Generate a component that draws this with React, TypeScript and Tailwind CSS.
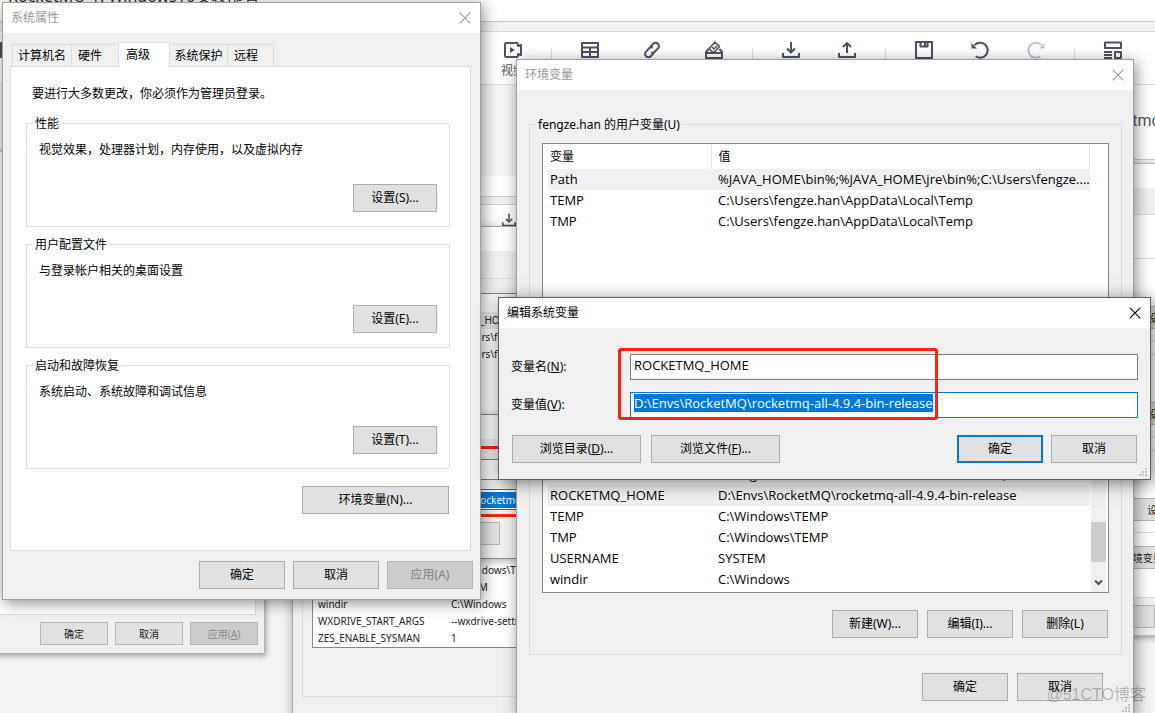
import React, { useEffect, useRef } from 'react'
import clsx from 'clsx'

type Row = [string, string]

const userVars: Row[] = [
  ['Path', '%JAVA_HOME\\bin%;%JAVA_HOME\\jre\\bin%;C:\\Users\\fengze....'],
  ['TEMP', 'C:\\Users\\fengze.han\\AppData\\Local\\Temp'],
  ['TMP', 'C:\\Users\\fengze.han\\AppData\\Local\\Temp'],
]

const systemVars: Row[] = [
  ['Path', 'C:\\Windows\\system32;C:\\Windows'],
  ['PSModulePath', '%ProgramFiles%\\WindowsPowerShell\\Modules;C:\\Wi...'],
  ['ROCKETMQ_HOME', 'D:\\Envs\\RocketMQ\\rocketmq-all-4.9.4-bin-release'],
  ['TEMP', 'C:\\Windows\\TEMP'],
  ['TMP', 'C:\\Windows\\TEMP'],
  ['USERNAME', 'SYSTEM'],
  ['windir', 'C:\\Windows'],
]

const oldSystemVars: Row[] = [
  ['TEMP', 'C:\\Windows\\TEMP'],
  ['TMP', 'C:\\Windows\\TEMP'],
  ['USERNAME', 'SYSTEM'],
  ['windir', 'C:\\Windows'],
  ['WXDRIVE_START_ARGS', '--wxdrive-setting=0'],
  ['ZES_ENABLE_SYSMAN', '1'],
]

const Btn = ({ className = 'w-[86px]', ...rest }: React.ComponentProps<'button'>) => (
  <button
    type="button"
    className={clsx('h-7 border border-[#adadad] bg-[#e1e1e1] disabled:border-[#b5b5b5] disabled:bg-[#cccccc] disabled:text-[#838383]', className)}
    {...rest}
  />
)

const SmallBtn = ({ className = 'w-[68px]', ...rest }: React.ComponentProps<'button'>) => (
  <button
    type="button"
    className={clsx('h-[23px] border border-[#b5b5b5] bg-[#e1e1e1] text-[10px] text-[#222] disabled:bg-[#cccccc] disabled:text-[#8a8a8a]', className)}
    {...rest}
  />
)

const TitleBar = ({ title, active = false }: { title: string; active?: boolean }) => (
  <div className={clsx('flex h-[30px] items-center justify-between bg-white pl-2 pr-[9px]', active ? 'text-black' : 'text-[#999]')}>
    <span>{title}</span>
    <button type="button" aria-label="关闭">
      <svg width="12" height="12" viewBox="0 0 12 12" fill="none" stroke="currentColor" strokeWidth="1.1">
        <path d="M.7.7l10.6 10.6M11.3.7L.7 11.3" />
      </svg>
    </button>
  </div>
)

const Grip = () => (
  <svg className="absolute bottom-[2px] right-[2px]" width="9" height="9" fill="#bfbfbf">
    <path d="M6 0h2v2H6zM3 3h2v2H3zM6 3h2v2H6zM0 6h2v2H0zM3 6h2v2H3zM6 6h2v2H6z" />
  </svg>
)

/* System properties */
const SettingGroup = ({ title, text, hotkey }: { title: string; text: string; hotkey: string }) => (
  <fieldset className="border border-[#dcdcdc]">
    <legend className="ml-[6px] px-[2px] pt-[2px] leading-4">{title}</legend>
    <div className="flex flex-col pb-[14px] pl-3 pr-3 pt-[10px]">
      <p className="leading-4">{text}</p>
      <Btn className="mt-[26px] w-[84px] self-end">设置({hotkey})...</Btn>
    </div>
  </fieldset>
)

const SystemProperties = () => (
  <section className="absolute left-[2px] top-[2px] w-[479px] border border-[#a0a0a0] bg-[#f0f0f0] shadow-[2px_3px_14px_rgba(0,0,0,0.45)]">
    <TitleBar title="系统属性" />
    <div className="flex items-end pl-[9px] pt-[9px]">
      <button type="button" className="h-[22px] w-[59px] border-l border-t border-[#dcdcdc] text-center">计算机名</button>
      <button type="button" className="h-[22px] w-[47px] border-l border-t border-[#dcdcdc] pl-[6px] text-left">硬件</button>
      <button type="button" className="relative z-10 -mb-px h-[25px] w-[52px] border-x border-t border-[#dcdcdc] bg-white pl-[7px] text-left">高级</button>
      <button type="button" className="h-[22px] w-[57px] border-t border-[#dcdcdc] text-center">系统保护</button>
      <button type="button" className="h-[22px] w-[47px] border-x border-t border-[#dcdcdc] pl-[6px] text-left">远程</button>
    </div>
    <div className="ml-[7px] mr-[9px] flex flex-col border border-[#dcdcdc] bg-white pb-9 pl-[15px] pr-5 pt-[19px]">
      <p className="mb-3 pl-[6px] leading-4">要进行大多数更改，你必须作为管理员登录。</p>
      <div className="flex flex-col gap-2">
        <SettingGroup title="性能" text="视觉效果，处理器计划，内存使用，以及虚拟内存" hotkey="S" />
        <SettingGroup title="用户配置文件" text="与登录帐户相关的桌面设置" hotkey="E" />
        <SettingGroup title="启动和故障恢复" text="系统启动、系统故障和调试信息" hotkey="T" />
      </div>
      <Btn className="mr-px mt-[17px] w-[147px] self-end">环境变量(N)...</Btn>
    </div>
    <div className="flex justify-end gap-2 py-[10px] pr-[7px]">
      <Btn>确定</Btn>
      <Btn>取消</Btn>
      <Btn disabled>应用(A)</Btn>
    </div>
  </section>
)

/* Environment variables */
const VarTable = ({ rows, selected, scroll }: { rows: Row[]; selected: number; scroll?: boolean }) => (
  <div className="flex h-44 justify-between border border-[#828790] bg-white pl-[5px]">
    <table className="w-[542px] table-fixed self-start text-left">
      <thead>
        <tr className="h-[25px]">
          <th className="w-[163px] border-r border-[#e5e5e5] pl-[2px] font-normal">变量</th>
          <th className="border-r border-[#e5e5e5] pl-[7px] font-normal">值</th>
        </tr>
      </thead>
      <tbody className="text-[13px] [font-family:'Open_Sans','Noto_Sans_CJK_SC',sans-serif]">
        {rows.map(([name, value], i) => (
          <tr key={name} className={clsx('h-[21px] whitespace-nowrap', i === selected && 'bg-[#f0f0f0]')}>
            <td className="pb-[2px] pl-[2px]">{name}</td>
            <td className="pb-[2px] pl-[7px]">{value}</td>
          </tr>
        ))}
      </tbody>
    </table>
    {scroll && (
      <div className="mr-[2px] flex w-[15px] flex-col items-center justify-end bg-[#f0f0f0] pb-[6px]">
        <div className="mb-[17px] h-10 w-full bg-[#cdcdcd]" />
        <svg width="9" height="7" viewBox="0 0 9 7" fill="none" stroke="#505050" strokeWidth="2">
          <path d="M1 1.5l3.5 3.5L8 1.5" />
        </svg>
      </div>
    )}
  </div>
)

const VarGroup = ({ title, keys, children }: { title: string; keys: string[]; children: React.ReactNode }) => (
  <fieldset className="min-w-0 border border-[#dcdcdc]">
    <legend className="ml-[6px] px-[2px] pt-[2px] leading-4">{title}</legend>
    <div className="px-3 pb-4 pt-[10px]">
      {children}
      <div className="mt-[17px] flex justify-end gap-[9px] pr-px">
        <Btn>新建({keys[0]})...</Btn>
        <Btn>编辑({keys[1]})...</Btn>
        <Btn>删除({keys[2]})</Btn>
      </div>
    </div>
  </fieldset>
)

const EnvironmentVariables = () => (
  <section className="absolute left-[516px] top-[59px] w-[618px] border border-[#a0a0a0] bg-[#f0f0f0] shadow-[2px_3px_14px_rgba(0,0,0,0.45)]">
    <TitleBar title="环境变量" />
    <div className="flex flex-col gap-2 pl-3 pr-[11px] pt-[25px]">
      <VarGroup title="fengze.han 的用户变量(U)" keys={['N', 'E', 'D']}>
        <VarTable rows={userVars} selected={0} />
      </VarGroup>
      <VarGroup title="系统变量(S)" keys={['W', 'I', 'L']}>
        <VarTable rows={systemVars} selected={2} scroll />
      </VarGroup>
    </div>
    <div className="flex justify-end gap-[9px] pb-[14px] pr-[30px] pt-[18px]">
      <Btn>确定</Btn>
      <Btn>取消</Btn>
    </div>
    <Grip />
  </section>
)

/* Edit system variable */
const fieldClass =
  "h-[26px] min-w-0 flex-1 border bg-white pb-[4px] pl-[3px] text-[13px] outline-none [font-family:'Open_Sans','Noto_Sans_CJK_SC',sans-serif]"

const EditVariable = () => {
  const valueRef = useRef<HTMLInputElement>(null)

  useEffect(() => {
    valueRef.current?.focus()
    valueRef.current?.select()
  }, [])

  return (
    <section className="absolute left-[498px] top-[297px] w-[653px] border border-[#5f5f5f] bg-[#f0f0f0] shadow-[2px_3px_16px_rgba(0,0,0,0.5)]">
      <TitleBar title="编辑系统变量" active />
      <div className="px-3 pb-4 pt-[26px]">
        <div className="flex items-center">
          <label htmlFor="var-name" className="w-[119px]">变量名(<u>N</u>):</label>
          <input id="var-name" defaultValue="ROCKETMQ_HOME" className={clsx(fieldClass, 'border-[#7a7a7a]')} />
        </div>
        <div className="mt-3 flex items-center">
          <label htmlFor="var-value" className="w-[119px]">变量值(<u>V</u>):</label>
          <input
            id="var-value"
            ref={valueRef}
            defaultValue="D:\Envs\RocketMQ\rocketmq-all-4.9.4-bin-release"
            className={clsx(fieldClass, 'border-[#0078d7] selection:bg-[#0078d7] selection:text-white')}
          />
        </div>
        <div className="mt-[17px] flex justify-between px-px">
          <div className="flex gap-[10px]">
            <Btn className="w-[129px]">浏览目录(<u>D</u>)...</Btn>
            <Btn className="w-[129px]">浏览文件(<u>F</u>)...</Btn>
          </div>
          <div className="flex gap-2">
            <button type="button" className="h-7 w-[86px] border-2 border-[#0078d7] bg-[#e1e1e1]">确定</button>
            <Btn>取消</Btn>
          </div>
        </div>
      </div>
      {/* red marker round both fields */}
      <div className="absolute left-[119px] top-[50px] h-[72px] w-[320px] rounded-[3px] border-[3px] border-[#fb2312]" />
      <Grip />
    </section>
  )
}

/* Editor page behind the dialogs */
const Icon = ({ children }: { children: React.ReactNode }) => (
  <svg width="18" height="18" viewBox="0 0 18 18" fill="none" stroke="currentColor" strokeWidth="2" strokeLinejoin="round">{children}</svg>
)

const downloadPath = 'M1 12v4h16v-4M9 1v10M5 7.5l4 4 4-4'

const Tool = ({ label, off, children }: { label: string; off?: boolean; children: React.ReactNode }) => (
  <button type="button" aria-label={label} className={clsx('flex w-14 flex-col items-center', off ? 'text-[#c4c4cc]' : 'text-[#4f5063]')}>
    <Icon>{children}</Icon>
  </button>
)

const Divider = () => <div className="mx-[10px] mt-2 h-6 w-px bg-[#dadada]" />

const Toolbar = () => (
  <div className="flex h-[53px] items-start justify-end border-b border-[#dadada] bg-white pr-[14px] pt-[9px]">
    <div className="mr-auto mt-px h-4 w-[2px] bg-[#4f5063]" />
    <button type="button" className="flex w-14 flex-col items-center text-[#4f5063]">
      <Icon>
        <path d="M1 3.2Q1 2 2.2 2h10.6Q14 2 14 3.2V5l3-1v10l-3-1v1.8q0 1.2-1.2 1.2H2.2Q1 16 1 14.8z" />
        <path d="M6 6l5 3-5 3z" fill="currentColor" stroke="none" />
      </Icon>
      <span className="mt-1 text-[12px] leading-4 text-[#555]">视频</span>
    </button>
    <Divider />
    <div className="flex gap-[6px]">
      <Tool label="表格"><path d="M1 2h16v14H1zM1 6.5h16M1 11h16M9 6.5V16" /></Tool>
      <Tool label="超链接">
        <path d="M7 6.2l3.2-3.4a3.3 3.3 0 0 1 4.8 4.6l-3.3 3.4a3.2 3.2 0 0 1-3.6.6M11 11.800l-3.2 3.4a3.3 3.3 0 0 1-4.8-4.6l3.3-3.4a3.2 3.2 0 0 1 3.6-.6" />
      </Tool>
      <Tool label="投票">
        <path d="M3.500 8L1 11v6h16v-6l-2.500-3M1 12h16" />
        <path d="M4 7.500L10 1l4.500 4.500L9.500 11H7.500zM7 6l2 2 3-3" strokeWidth="1.5" />
      </Tool>
    </div>
    <Divider />
    <Tool label="导入"><path d={downloadPath} /></Tool>
    <Tool label="导出"><path d="M1 12v4h16v-4M9 12V2M5 6l4-4 4 4" /></Tool>
    <Divider />
    <Tool label="保存"><path d="M1 1h16v16H1zM5.5 1v4.5h7V1M10 2v2.5" /></Tool>
    <Tool label="撤销">
      <path d="M3.5 4.2a7.500 7.500 0 1 1 1.2 11" />
      <path d="M.5 2v5.500h5.500z" fill="currentColor" stroke="none" />
    </Tool>
    <Tool label="重做" off>
      <path d="M14.5 4.2a7.500 7.500 0 1 0-1.2 11" />
      <path d="M17.500 2v5.500h-5.500z" fill="currentColor" stroke="none" />
    </Tool>
    <Divider />
    <Tool label="模版"><path d="M1 1.5h16V7H1zM0 11h8M0 14h8M0 17h8M11 11h6v6h-6z" /></Tool>
  </div>
)

const SmallTable = ({ rows, head, shaded }: { rows: Row[]; head: Row; shaded?: boolean }) => (
  <table className="w-full table-fixed bg-white text-left">
    <thead>
      <tr className="h-[18px]">
        <th className="w-[138px] pl-[5px] font-normal">{head[0]}</th>
        <th className="font-normal">{head[1]}</th>
      </tr>
    </thead>
    <tbody>
      {rows.map(([name, value], i) => (
        <tr key={name} className={clsx('h-[17px] whitespace-nowrap leading-4', shaded && i === 0 && 'bg-[#ececec]')}>
          <td className="pb-px pl-[5px]">{name}</td>
          <td className="pb-px">{value}</td>
        </tr>
      ))}
    </tbody>
  </table>
)

const OldSystemProperties = () => (
  <section className="absolute -left-[119px] top-[150px] flex h-[504px] w-[384px] flex-col border border-[#b0b0b0] bg-[#f0f0f0] shadow-[1px_2px_6px_rgba(0,0,0,0.35)]">
    <div className="mr-2 flex-1 border border-[#dcdcdc] bg-white" />
    <div className="flex justify-end gap-[7px] pb-2 pr-[6px] pt-[7px]">
      <SmallBtn>确定</SmallBtn>
      <SmallBtn>取消</SmallBtn>
      <SmallBtn disabled>应用(<u>A</u>)</SmallBtn>
    </div>
  </section>
)

const OldEnvironment = () => (
  <section className="absolute left-[292px] top-[226px] w-[560px] border border-[#a8a8a8] bg-[#f0f0f0] pb-16 text-[10px] text-[#222] shadow-[0_2px_10px_rgba(0,0,0,0.3)]">
    <div className="h-6 bg-white" />
    <div className="flex flex-col gap-[22px] px-[9px] pt-[21px]">
      <fieldset className="min-w-0 border border-[#dcdcdc] px-[9px] pb-12">
        <legend className="leading-3">用户变量</legend>
        <div className="mt-[9px] h-[141px] border border-[#828790] bg-white">
          <SmallTable head={['变量', '值']} rows={userVars} shaded />
        </div>
      </fieldset>
      <fieldset className="min-w-0 border border-[#dcdcdc] px-[9px] pb-12">
        <legend className="leading-3">系统变量</legend>
        <div className="mt-[9px] border border-[#828790]">
          <SmallTable head={['变量', '值']} rows={oldSystemVars} />
        </div>
      </fieldset>
    </div>
  </section>
)

const OldEdit = () => (
  <section className="absolute left-[290px] top-[414px] w-[520px] border border-[#8a8a8a] bg-[#f0f0f0] pb-[13px] text-[10px] shadow-[0_2px_8px_rgba(0,0,0,0.3)]">
    <div className="h-6 bg-white" />
    <div className="pl-[91px] pr-[10px] pt-5">
      <input aria-label="变量名" defaultValue="ROCKETMQ_HOME" className="block h-[21px] w-full border border-[#7a7a7a] bg-white pl-[2px]" />
      <div className="mt-[9px] flex h-[21px] items-center border border-[#0078d7] bg-white pl-[2px]">
        <span className="bg-[#0078d7] leading-4 text-white">D:\Envs\RocketMQ\rocketmq-all-4.9.4-bin-release</span>
      </div>
    </div>
    <SmallBtn className="ml-[106px] mt-3 w-[103px]">浏览(F)...</SmallBtn>
    <div className="absolute left-20 top-[31px] h-[71px] w-64 rounded-[2px] border-[3px] border-[#fb2312]" />
  </section>
)

const NestedPage = () => (
  <div className="absolute left-[300px] top-[176px] w-[400px] bg-white">
    <div className="h-5" />
    <div className="h-[9px] border-y border-[#cfcfcf] bg-[#f0f0f0]" />
    <div className="flex h-[60px] justify-end pr-[184px] pt-2 text-[#4f5063]">
      <svg width="14" height="14" viewBox="0 0 18 18" fill="none" stroke="currentColor" strokeWidth="2"><path d={downloadPath} /></svg>
    </div>
  </div>
)

const SmallGroup = () => (
  <div className="flex h-[83px] flex-col items-start justify-end border border-[#dcdcdc] pb-[11px] pl-[18px]">
    <SmallBtn>设置(S)...</SmallBtn>
  </div>
)

const RightProperties = () => (
  <section className="absolute left-[1060px] top-[163px] w-96 border border-[#c0c0c0] bg-[#f0f0f0] shadow-[1px_2px_6px_rgba(0,0,0,0.35)]">
    <div className="h-6 bg-white" />
    <div className="h-[26px]" />
    <div className="border border-[#dcdcdc] bg-white pb-[28px] pl-[52px] pt-[43px]">
      <div className="flex flex-col gap-[13px]">
        <SmallGroup />
        <SmallGroup />
        <SmallGroup />
      </div>
      <SmallBtn className="mt-[13px] w-[79px]">环境变量(N)...</SmallBtn>
    </div>
    <div className="pb-[7px] pl-[26px] pt-[7px]">
      <SmallBtn>确定</SmallBtn>
    </div>
  </section>
)

const App = () => {
  return (
    <main className="relative h-screen w-full overflow-hidden bg-[#f4f4f4] text-[12px] leading-4 text-black [font-family:'Noto_Sans','Noto_Sans_CJK_SC',sans-serif]">
      <div className="flex h-[22px] items-start overflow-hidden border-b border-[#c8c8c8] bg-white pl-2">
        <h1 className="-mt-3 whitespace-nowrap text-[16px] leading-4 text-[#333]">RocketMQ-1. Windows10安装部署</h1>
      </div>
      <div className="h-[10px] border-b border-[#dadada] bg-[#f2f2f2]" />
      <Toolbar />
      <article className="ml-auto h-[75px] w-[100px] border-b border-[#c8c8c8] bg-white pl-[38px] pt-6 text-[16px] leading-6 text-[#555] [font-family:Roboto,sans-serif]">rocketmq</article>
      <NestedPage />
      <OldSystemProperties />
      <OldEnvironment />
      <OldEdit />
      <RightProperties />
      <SystemProperties />
      <EnvironmentVariables />
      <EditVariable />
      <span className="absolute bottom-[6px] right-[9px] text-[16px] leading-6 text-black/25 [font-family:'Liberation_Sans','Noto_Sans_CJK_SC',sans-serif]">@51CTO博客</span>
    </main>
  )
}

export default App
